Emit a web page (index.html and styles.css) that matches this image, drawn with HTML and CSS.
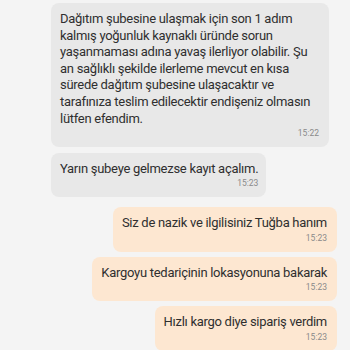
FILE: index.html
```html
<!DOCTYPE html>
<html lang="tr">
<head>
	<meta charset="UTF-8">
	<title>Sohbet</title>
	<link rel="stylesheet" href="styles.css">
</head>
<body>
	<div id="chat">
		<div class="msg in wide">
			<div class="text">Dağıtım şubesine ulaşmak için son 1 adım kalmış yoğunluk kaynaklı üründe sorun yaşanmaması adına yavaş ilerliyor olabilir. Şu an sağlıklı şekilde ilerleme mevcut en kısa sürede dağıtım şubesine ulaşacaktır ve tarafınıza teslim edilecektir endişeniz olmasın lütfen efendim.</div>
			<div class="time">15:22</div>
		</div>
		<div class="msg in">
			<div class="text">Yarın şubeye gelmezse kayıt açalım.</div>
			<div class="time">15:23</div>
		</div>
		<div class="msg out">
			<div class="text">Siz de nazik ve ilgilisiniz Tuğba hanım</div>
			<div class="time">15:23</div>
		</div>
		<div class="msg out">
			<div class="text">Kargoyu tedariçinin lokasyonuna bakarak</div>
			<div class="time">15:23</div>
		</div>
		<div class="msg out">
			<div class="text">Hızlı kargo diye sipariş verdim</div>
			<div class="time">15:23</div>
		</div>
	</div>
</body>
</html>
```

FILE: styles.css
```css
* {
	padding:0;
	margin:0;
	box-sizing:border-box;
}
body {
	background:#f4f4f4;
	font-family:Roboto, "Noto Sans", sans-serif;
	color:#2f2f2f;
	overflow:hidden;
}
#chat {
	display:flex;
	flex-direction:column;
	gap:5px;
	padding:3px 13px 0 51px;
}
.msg {
	padding:8px 9px 8px 9px;
	border-radius:8px;
	max-width:278px;
}
.msg.in {
	align-self:flex-start;
	background:#e8e8e8;
	padding-right:8px;
}
.msg.wide {
	width:278px;
	padding-right:10px;
	margin-bottom:0.5px;
}
.msg.out {
	align-self:flex-end;
	background:#fde7d1;
	padding-right:10px;
}
.msg.in + .msg.out {
	margin-top:5px;
}
.text {
	font-size:13px;
	letter-spacing:-0.28px;
	line-height:16.6px;
}
.time {
	font-size:8.5px;
	line-height:11px;
	color:#8a8a8a;
	text-align:right;
	margin-top:1px;
}
```
